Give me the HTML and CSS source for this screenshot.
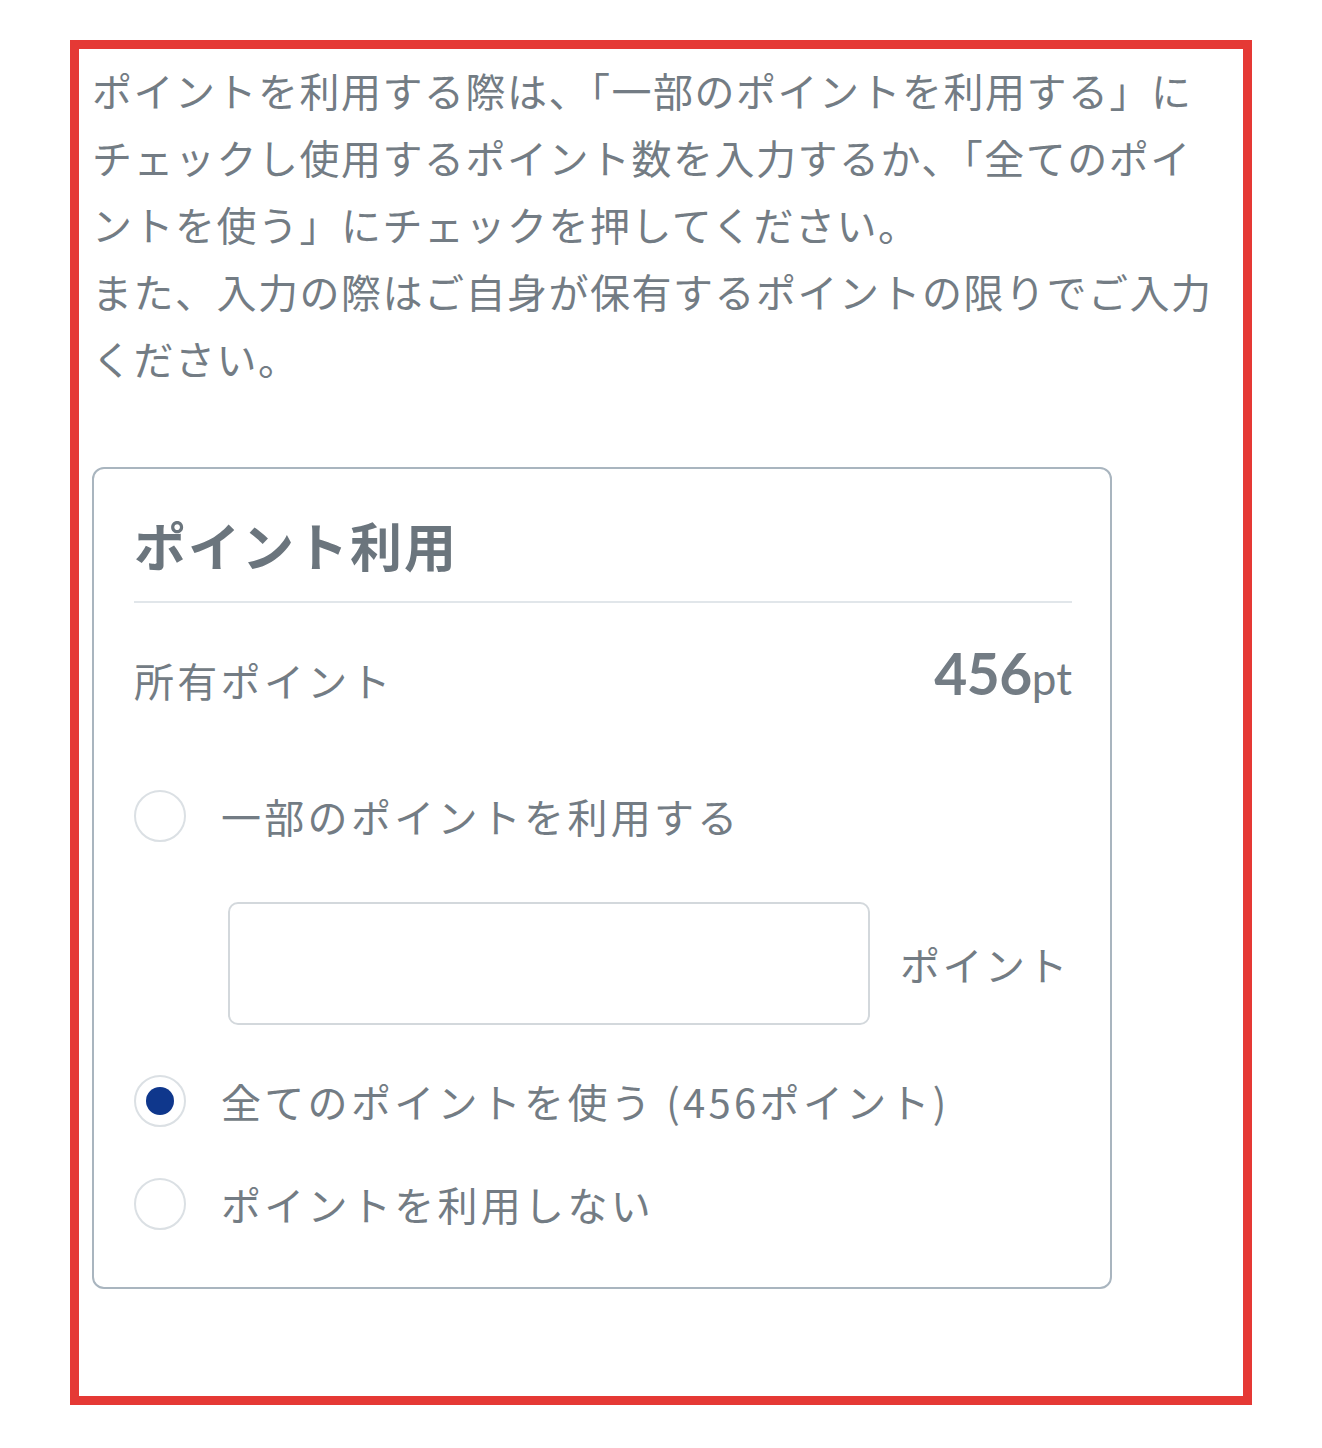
FILE: index.html
```html
<!DOCTYPE html>
<html lang="ja">
<head>
    <meta charset="UTF-8">
    <meta name="viewport" content="width=device-width, initial-scale=1.0">
    <title>ポイント利用</title>
    <link rel="stylesheet" href="styles.css">
</head>
<body>
    <div class="frame">
        <p class="notice">ポイントを利用する際は、「一部のポイントを利用する」にチェックし使用するポイント数を入力するか、「全てのポイントを使う」にチェックを押してください。<br>また、入力の際はご自身が保有するポイントの限りでご入力ください。</p>

        <section class="point-card">
            <h2 class="card-title">ポイント利用</h2>

            <div class="owned">
                <span class="owned-label">所有ポイント</span>
                <span class="owned-value"><b>456</b>pt</span>
            </div>

            <label class="option option-first">
                <input type="radio" name="usePoint" value="part">
                <span class="radio"></span>
                <span>一部のポイントを利用する</span>
            </label>

            <div class="amount">
                <input type="text" class="amount-input" id="pointAmount">
                <span class="amount-unit">ポイント</span>
            </div>

            <label class="option option-all">
                <input type="radio" name="usePoint" value="all" checked>
                <span class="radio"></span>
                <span>全てのポイントを使う (456ポイント)</span>
            </label>

            <label class="option option-none">
                <input type="radio" name="usePoint" value="none">
                <span class="radio"></span>
                <span>ポイントを利用しない</span>
            </label>
        </section>
    </div>
</body>
</html>
```

FILE: styles.css
```css
:root {
    --text: #737c84;
    --title: #6b757d;
    --frame: #e53935;
    --card-border: #a9b5bf;
    --line: #e1e6ea;
    --radio-border: #dbe0e4;
    --navy: #0f378c;
}

* {
    box-sizing: border-box;
}

body {
    margin: 0;
    background: #fff;
    color: var(--text);
    font-family: "Noto Sans CJK JP", "Noto Sans", sans-serif;
}

.frame {
    width: 1182px;
    height: 1365px;
    margin: 40px 0 0 70px;
    padding: 8px 13px;
    border: 9px solid var(--frame);
}

.notice {
    margin: 0;
    font-size: 40px;
    line-height: 67px;
    letter-spacing: 1.5px;
}

.point-card {
    width: 1020px;
    margin-top: 75px;
    padding: 41px 38px 53px 40px;
    border: 2px solid var(--card-border);
    border-radius: 12px;
    font-size: 40px;
    letter-spacing: 3.3px;
}

.card-title {
    margin: 0;
    padding-bottom: 21px;
    border-bottom: 2px solid var(--line);
    color: var(--title);
    font-size: 52px;
    font-weight: bold;
    line-height: 70px;
    letter-spacing: 2px;
}

.owned {
    display: flex;
    justify-content: space-between;
    align-items: center;
    height: 70px;
    margin-top: 42px;
}

.owned-value {
    padding-bottom: 14px;
    font-family: Lato, "Noto Sans", sans-serif;
    font-size: 44px;
    letter-spacing: 0;
    line-height: 1;
}

.owned-value b {
    font-size: 57px;
    letter-spacing: -0.5px;
}

.option {
    display: flex;
    align-items: center;
    gap: 35px;
    height: 60px;
    line-height: 60px;
    cursor: pointer;
}

.option input {
    display: none;
}

.option-first {
    margin-top: 71px;
}

.option-all {
    margin-top: 46px;
}

.option-none {
    margin-top: 43px;
}

.radio {
    flex: none;
    display: grid;
    place-items: center;
    width: 52px;
    height: 52px;
    border: 2px solid var(--radio-border);
    border-radius: 50%;
}

.option input:checked + .radio::after {
    content: "";
    width: 28px;
    height: 28px;
    border-radius: 50%;
    background: var(--navy);
}

.amount {
    display: flex;
    align-items: center;
    gap: 30px;
    margin: 56px 0 0 94px;
}

.amount-input {
    flex: none;
    width: 642px;
    height: 123px;
    border: 2px solid #d3d8dc;
    border-radius: 10px;
    background: #fff;
}

.amount-input:focus {
    outline: none;
    border-color: var(--card-border);
}

.amount-unit {
    white-space: nowrap;
    letter-spacing: 2.5px;
    line-height: 60px;
}
```
